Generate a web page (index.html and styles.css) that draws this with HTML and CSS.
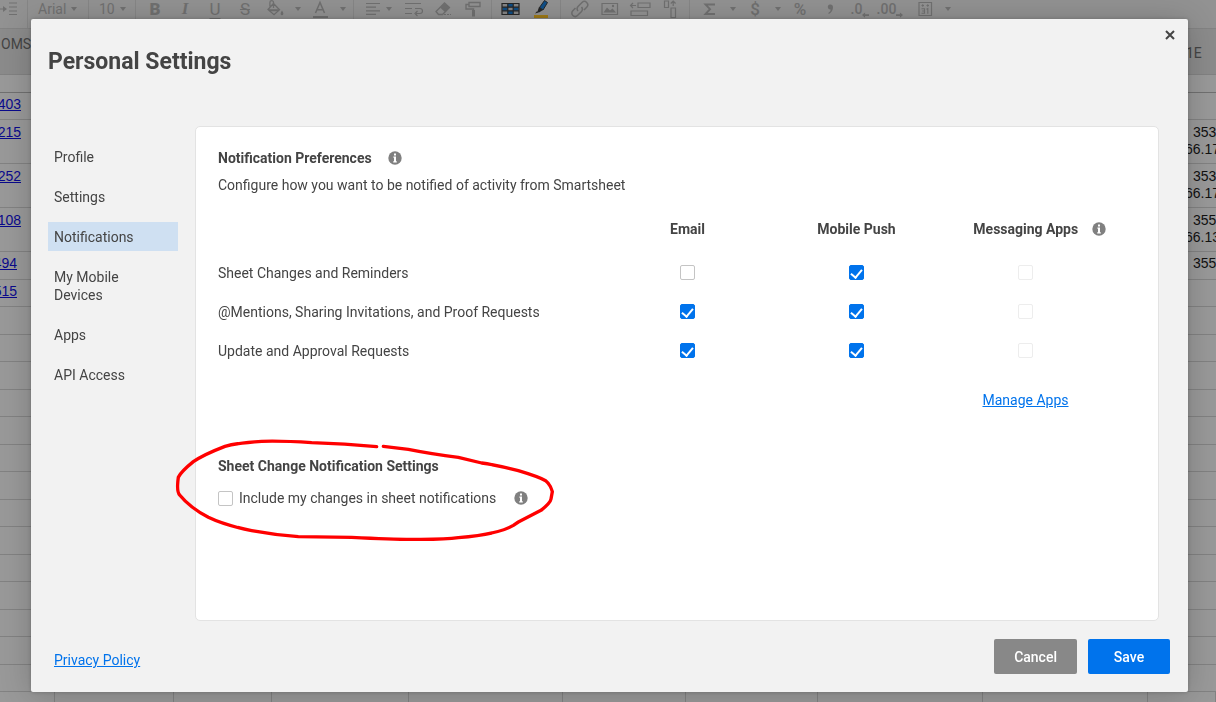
FILE: index.html
```html
<!DOCTYPE html>
<html lang="en">
<head>
<meta charset="utf-8">
<title>Personal Settings</title>
<link rel="stylesheet" href="styles.css">
</head>
<body>
<svg class="symbols" aria-hidden="true">
  <symbol id="info" viewBox="0 0 14 14"><circle cx="7" cy="7" r="6.7" fill="#808080"/><path fill="#fff" d="M6 2.600h2v1.900H6zM5.400 5.500H8v4.700h.8v1.200H5.200v-1.200H6V6.700h-.6z"/></symbol>
</svg>

<div class="app" aria-hidden="true">
  <div class="toolbar">
    <div class="group group-first">
      <svg class="indent" viewBox="0 0 18 20"><path d="M0 10h5M9 4h8M9 8h8M9 12h8M9 15.500h8" stroke-width="1.200"/><path class="solid" d="M3 7l4 3-4 3z"/></svg>
    </div>
    <div class="group"><button class="menu menu-font" tabindex="-1">Arial <i class="arrow"></i></button></div>
    <div class="group"><button class="menu menu-size" tabindex="-1">10 <i class="arrow"></i></button></div>
    <div class="group group-format">
      <button class="tool bold" tabindex="-1">B</button>
      <button class="tool italic" tabindex="-1">I</button>
      <button class="tool underline" tabindex="-1">U</button>
      <button class="tool strike" tabindex="-1">S</button>
      <button class="tool" tabindex="-1"><svg viewBox="0 0 20 20"><path d="M8.500 4.500l6 6.200-5.500 5-6-5.200zM8.500 9V3.500a1.800 1.800 0 0 0-3.600 0v4" stroke-width="1.300"/><path class="solid" d="M3 10.300h11.500l-2 2H5zM17 11.500c2.500 3.500 1 4.800 0 4.800s-2.500-1.300 0-4.800z"/></svg></button>
      <span class="caret"><i class="arrow"></i></span>
      <button class="tool" tabindex="-1"><svg viewBox="0 0 20 20"><path d="M5.500 14L10 3.500 14.500 14M7 10.800h6" stroke-width="1.500"/><path d="M3 18h15" stroke-width="2"/></svg></button>
      <span class="caret"><i class="arrow"></i></span>
    </div>
    <div class="group group-align">
      <button class="tool wide" tabindex="-1"><svg viewBox="0 0 20 20"><path d="M3 4.500h14M3 8.200h10M3 11.800h14M3 15.300h10" stroke-width="1.200"/></svg><i class="arrow"></i></button>
      <button class="tool" tabindex="-1"><svg viewBox="0 0 20 20"><path d="M2 4.500h16M2 9.500h7M2 14.500h7M12 9.500h5a2.200 2.200 0 0 1 0 5h-4M14.500 12l-2.500 2.500 2.500 2.500" stroke-width="1.200"/></svg></button>
      <button class="tool" tabindex="-1"><svg viewBox="0 0 20 20"><path d="M8 15.500H5.500L3 12.500 11.500 4l5 4.500-7 7z" stroke-width="1.300"/><path class="solid" d="M7 8.500L11.500 4l5 4.500-4.500 4.500z"/><path d="M11 15.500h7" stroke-dasharray="2 1"/></svg></button>
      <button class="tool" tabindex="-1"><svg viewBox="0 0 20 20"><path d="M6 3.500h11v4H6zM6 5.500H3v4.500h7.500v2.500" stroke-width="1.400"/><path class="solid" d="M9 11h3v6.500H9z"/></svg></button>
    </div>
    <div class="group group-view">
      <button class="tool" tabindex="-1"><svg viewBox="0 0 20 20"><path fill="#858585" stroke="none" d="M1 4.500h17v11H1z"/><path fill="#0d4d86" stroke="none" d="M1.500 8.200h5.300v3.600H1.500zM6.800 4.500h5.400v3.700H6.800zM12.200 8.200h5.300v3.600h-5.300zM6.800 11.800h5.400v3.700H6.800z"/><path stroke="#262626" stroke-width="1.200" d="M1 4.500h17v11H1zM1 8.200h17M1 11.800h17M6.800 4.500v11M12.200 4.500v11"/></svg></button>
      <button class="tool" tabindex="-1"><svg viewBox="0 0 20 20"><path fill="#a07b16" stroke="none" d="M3 16h14v3H3z"/><path fill="#104f88" stroke="#262626" stroke-width="1" d="M13.500 1.500l3 2L12 11 8.500 8.500z"/><path fill="#262626" stroke="none" d="M8 8l4 3-4 2.500-1.500-1zM6 12.200l1.700 1.300L4 14.500z"/></svg></button>
    </div>
    <div class="group group-insert">
      <button class="tool" tabindex="-1"><svg viewBox="0 0 20 20"><path d="M8 12a3.500 3.500 0 0 1 0-4.500l4-4a3.300 3.300 0 0 1 4.700 4.700L14 11M11.500 8a3.500 3.500 0 0 1 0 4.500l-4 4a3.300 3.300 0 0 1-4.700-4.700L5.500 9" stroke-width="1.500"/></svg></button>
      <button class="tool" tabindex="-1"><svg viewBox="0 0 20 20"><path d="M2 4.500h15.500v11H2z" stroke-width="1.200"/><path class="solid" d="M3.500 13.500l3.500-5 3 3 2.500-2 3.500 4z"/><circle class="solid" cx="13" cy="7" r="1.200"/></svg></button>
      <button class="tool" tabindex="-1"><svg class="row-icon" viewBox="0 0 22 20"><path d="M9 4h12v4.500H9zM2 12h16.500v4.500H2zM2 6.500h5M4 4L1.500 6.500 4 9" stroke-width="1.200"/></svg></button>
      <button class="tool" tabindex="-1"><svg viewBox="0 0 20 20"><path d="M4.500 2h4v6.500h-4zM11 9h4.500v9.500H11zM13.200 7V2.500M10.800 4.500L13.200 2l2.400 2.500" stroke-width="1.200"/></svg></button>
    </div>
    <div class="group group-number">
      <button class="tool" tabindex="-1"><svg viewBox="0 0 20 20"><path d="M14 6.500V5.500H5.500l4.500 4.700L5.500 15H14v-1" stroke-width="1.900"/></svg></button>
      <span class="caret"><i class="arrow"></i></span>
      <button class="tool currency" tabindex="-1">$</button>
      <span class="caret"><i class="arrow"></i></span>
      <button class="tool percent" tabindex="-1">%</button>
      <button class="tool" tabindex="-1"><svg viewBox="0 0 20 20"><path class="solid" d="M10 5.500a2.500 2.500 0 0 1 3 2.500c0 4-2.500 6.500-4.500 7v-1.300c1.500-.7 2-1.700 2.200-3.200A2.500 2.500 0 1 1 10 5.500z"/></svg></button>
      <button class="tool decimal" tabindex="-1">.0<svg viewBox="0 0 8 6"><path class="solid" d="M0 3l3.500-3v2H8v2H3.500v2z"/></svg></button>
      <button class="tool decimal" tabindex="-1">.00<svg viewBox="0 0 8 6"><path class="solid" d="M8 3L4.500 0v2H0v2h4.500v2z"/></svg></button>
      <button class="tool calendar" tabindex="-1"><svg viewBox="0 0 20 20"><path d="M4 3.500h12.500v13H4z" stroke-width="1.200"/><path d="M6.500 6.500h2.500M7.700 5.300v2.500M11.500 6.500h2.500M12.700 5.300v2.500M6.500 9.700h3v4.600h-3M7.200 12h2.300M11.500 10.200l1.300-.6v5.200" stroke-width="1.100"/></svg></button>
      <span class="caret"><i class="arrow"></i></span>
    </div>
  </div>
  <table class="sheet">
    <colgroup><col class="c1"><col class="c2"><col class="c3"><col class="c4"><col class="c5"><col class="c6"><col class="c7"><col class="c8"><col class="c8"><col></colgroup>
    <thead>
      <tr class="names"><th class="upper">OMS</th><th></th><th></th><th></th><th></th><th></th><th></th><th></th><th></th><th class="last">1E</th></tr>
      <tr class="filter"><th></th><th></th><th></th><th></th><th></th><th></th><th></th><th></th><th></th><th></th></tr>
    </thead>
    <tbody>
      <tr class="odd"><td class="key"><a>403</a></td><td colspan="8"></td><td></td></tr>
      <tr class="tall"><td class="key"><a>215</a></td><td colspan="8"></td><td class="value"><span>353</span>66.17</td></tr>
      <tr class="tall"><td class="key"><a>252</a></td><td colspan="8"></td><td class="value"><span>353</span>66.17</td></tr>
      <tr class="tall"><td class="key"><a>108</a></td><td colspan="8"></td><td class="value"><span>355</span>66.13</td></tr>
      <tr><td class="key short"><a>494</a></td><td colspan="8"></td><td class="value"><span>355</span></td></tr>
      <tr class="odd"><td class="key short"><a>515</a></td><td colspan="8"></td><td></td></tr>
      <tr><td colspan="10"></td></tr><tr class="odd"><td colspan="10"></td></tr>
      <tr><td colspan="10"></td></tr><tr class="odd"><td colspan="10"></td></tr>
      <tr><td colspan="10"></td></tr><tr class="odd"><td colspan="10"></td></tr>
      <tr><td colspan="10"></td></tr><tr class="odd"><td colspan="10"></td></tr>
      <tr><td colspan="10"></td></tr><tr class="odd"><td colspan="10"></td></tr>
      <tr><td colspan="10"></td></tr><tr class="odd"><td colspan="10"></td></tr>
      <tr><td colspan="10"></td></tr><tr class="odd"><td colspan="10"></td></tr>
      <tr class="ruled"><td></td><td></td><td></td><td></td><td></td><td></td><td></td><td></td><td></td><td></td></tr>
    </tbody>
  </table>
</div>

<div class="overlay">
  <div class="dialog" role="dialog" aria-labelledby="title">
    <header class="dialog-head">
      <h1 id="title">Personal Settings</h1>
      <button class="close" aria-label="Close"><svg viewBox="0 0 10 10"><path d="M1 1l8 8M9 1L1 9"/></svg></button>
    </header>
    <div class="dialog-body">
      <nav class="side">
        <a href="#">Profile</a>
        <a href="#">Settings</a>
        <a href="#" class="active">Notifications</a>
        <a href="#">My Mobile Devices</a>
        <a href="#">Apps</a>
        <a href="#">API Access</a>
      </nav>
      <main class="panel">
        <section>
          <h2>Notification Preferences <svg class="info"><use href="#info"/></svg></h2>
          <p>Configure how you want to be notified of activity from Smartsheet</p>
          <table class="prefs">
            <thead>
              <tr><td></td><th scope="col">Email</th><th scope="col">Mobile Push</th><th scope="col" class="with-info">Messaging Apps <svg class="info"><use href="#info"/></svg></th></tr>
            </thead>
            <tbody>
              <tr><th scope="row">Sheet Changes and Reminders</th><td><input type="checkbox" aria-label="Sheet changes by email"></td><td><input type="checkbox" checked aria-label="Sheet changes by mobile push"></td><td><input type="checkbox" disabled aria-label="Sheet changes by messaging apps"></td></tr>
              <tr><th scope="row">@Mentions, Sharing Invitations, and Proof Requests</th><td><input type="checkbox" checked aria-label="Mentions by email"></td><td><input type="checkbox" checked aria-label="Mentions by mobile push"></td><td><input type="checkbox" disabled aria-label="Mentions by messaging apps"></td></tr>
              <tr><th scope="row">Update and Approval Requests</th><td><input type="checkbox" checked aria-label="Updates by email"></td><td><input type="checkbox" checked aria-label="Updates by mobile push"></td><td><input type="checkbox" disabled aria-label="Updates by messaging apps"></td></tr>
            </tbody>
            <tfoot>
              <tr><td colspan="3"></td><td><a class="link" href="#">Manage Apps</a></td></tr>
            </tfoot>
          </table>
        </section>
        <section class="changes">
          <h2>Sheet Change Notification Settings</h2>
          <div class="option">
            <input type="checkbox" id="mine"><label for="mine">Include my changes in sheet notifications</label>
            <svg class="info"><use href="#info"/></svg>
          </div>
          <svg class="marker" viewBox="0 0 1200 360" aria-hidden="true"><path d="M635 50Q540 41 440 38Q350 32 290 34Q215 39 180 49Q115 74 85 95Q48 125 40 142Q34 185 44 195Q75 233 130 262Q180 286 260 302Q330 315 400 320L560 322Q680 328 740 328Q840 329 880 323Q1000 313 1045 286L1060 276L1128 241Q1156 219 1158 207L1162 185Q1157 165 1142 152Q1120 140 1060 122Q1000 106 950 99L880 82Q800 72 730 58L655 49"/></svg>
        </section>
      </main>
    </div>
    <footer class="dialog-foot">
      <a class="link" href="#">Privacy Policy</a>
      <div class="actions">
        <button class="btn cancel">Cancel</button>
        <button class="btn save">Save</button>
      </div>
    </footer>
  </div>
</div>
</body>
</html>
```
FILE: styles.css
```css
* { box-sizing: border-box; }
html, body { height: 100%; }
body {
  margin: 0;
  overflow: hidden;
  background: #999;
  color: #444;
  font: 14px/18px Roboto, sans-serif;
}
button { border: 0; padding: 0; background: none; color: inherit; font: inherit; }
svg { flex: none; }
.symbols { position: absolute; width: 0; height: 0; }

/* Dimmed sheet behind the dialog */
.app { height: 100%; overflow: hidden; }
.toolbar { display: flex; height: 29px; background: #929292; border-bottom: 1px solid #838383; color: #707070; }
.group { display: flex; align-items: center; padding-bottom: 10px; border-left: 1px solid #868686; }
.group-first { width: 27px; border-left: 0; }
.toolbar svg { width: 20px; height: 20px; fill: none; stroke: #707070; }
.toolbar .indent { width: 18px; }
.toolbar .solid { fill: #707070; stroke: none; }
.menu { display: flex; align-items: center; gap: 5px; padding-left: 10px; }
.menu-font { width: 60px; }
.menu-size { width: 46px; }
.arrow { border: 3px solid transparent; border-top: 4px solid #707070; border-bottom: 0; }
.group-format, .group-align, .group-view, .group-insert { padding-left: 4px; padding-right: 4px; }
.group-format { padding-right: 3px; }
.group-number { padding-left: 5px; }
.group-align { padding-right: 3px; }
.tool { display: flex; align-items: center; justify-content: center; width: 30px; height: 18px; font-size: 17px; }
.wide { width: 40px; justify-content: flex-start; gap: 3px; padding-left: 5px; }
.toolbar .row-icon { width: 22px; }
.caret { display: flex; justify-content: center; width: 15px; }
.bold { font-weight: 900; }
.italic { font-family: "Liberation Serif", serif; font-style: italic; font-weight: 700; }
.underline { text-decoration: underline; text-underline-offset: 3px; }
.strike { text-decoration: line-through; }
.currency, .percent { font-weight: 500; }
.decimal { font-size: 14px; font-weight: 500; }
.toolbar .decimal svg { width: 7px; height: 6px; align-self: flex-end; }
.calendar { margin-left: 5px; }

.sheet { width: 100%; table-layout: fixed; border-collapse: separate; border-spacing: 0; }
.sheet th, .sheet td { padding: 0; border-bottom: 1px solid #828282; }
.c1 { width: 55px; }
.c2 { width: 119px; }
.c3 { width: 98px; }
.c4 { width: 137px; }
.c5 { width: 154px; }
.c6 { width: 123px; }
.c7 { width: 132px; }
.c8 { width: 165px; }
.names th { height: 46px; background: #8b8b8b; font-weight: 400; text-align: left; }
.sheet .upper { padding: 0 0 15px 1px; }
.sheet .last { padding: 3px 0 0 38px; }
.sheet .filter th { height: 18px; border-bottom-color: #707070; }
.sheet tbody td { height: 28px; vertical-align: top; font: 14px/17px "Liberation Sans", Arial, sans-serif; color: #111; }
.sheet tbody .odd td { height: 27px; }
.sheet tbody .tall td { height: 44px; }
.sheet tbody .key { padding: 3px 34px 0 0; direction: rtl; white-space: nowrap; }
.sheet tbody .short { padding-right: 38px; }
.key a { color: #0a0a8c; text-decoration: underline; }
.sheet tbody .value { padding: 3px 0 0 37px; }
.sheet tbody .tall .key, .sheet tbody .tall .value { padding-top: 4px; }
.value span { display: block; padding-left: 8px; }
.ruled td { border-right: 1px solid #828282; }

/* Dialog */
.overlay { position: fixed; inset: 0; display: flex; padding: 19px 28px 10px 31px; }
.dialog {
  flex: 1;
  display: flex;
  flex-direction: column;
  background: #f2f2f2;
  border-radius: 2px;
  box-shadow: 0 3px 32px rgba(0, 0, 0, .2), 0 0 4px rgba(0, 0, 0, .2);
}
.dialog-head { display: flex; justify-content: space-between; align-items: flex-start; padding: 10px 12px 0 17px; height: 107px; }
h1 { margin: 19px 0 0; font-size: 23px; line-height: 28px; font-weight: 700; }
.close { display: flex; width: 12px; height: 12px; align-items: center; justify-content: center; }
.close svg { width: 10px; height: 10px; stroke: #444; stroke-width: 2; fill: none; }
.dialog-body { flex: 1; display: flex; gap: 17px; padding: 0 29px 0 17px; }
.side { display: flex; flex-direction: column; gap: 11px; width: 130px; padding-top: 16px; }
.side a { padding: 6px 30px 5px 6px; color: inherit; text-decoration: none; }
.side .active { background: #cfe0f2; }
.panel { flex: 1; padding: 22px 48px 22px 22px; background: #fff; border: 1px solid #e3e3e3; border-radius: 5px; }
h2 { display: flex; align-items: center; gap: 16px; margin: 0; font-size: 14px; line-height: 18px; font-weight: 700; }
.panel p { margin: 9px 0 11px; }
.info { width: 14px; height: 14px; }
.prefs { width: 100%; table-layout: fixed; border-collapse: collapse; }
.prefs th, .prefs td { width: 169px; padding: 0; text-align: center; }
.prefs tr > :first-child { width: auto; text-align: left; font-weight: 400; }
.prefs thead tr { height: 48px; }
.prefs thead th { font-weight: 700; }
.prefs .with-info { padding-left: 28px; white-space: nowrap; }
.with-info .info { margin-left: 10px; vertical-align: -2px; }
.prefs tbody tr { height: 39px; }
.prefs tfoot tr { height: 60px; }
input[type="checkbox"] {
  appearance: none;
  display: flex;
  justify-content: center;
  align-items: flex-start;
  width: 15px;
  height: 15px;
  margin: 0;
  background: #fff;
  border: 1px solid #c4c4c4;
  border-radius: 2px;
}
.prefs input[type="checkbox"] { margin: 0 auto; }
input[type="checkbox"]:checked { background: #0073ec; border-color: #0073ec; }
input[type="checkbox"]:checked::after {
  content: "";
  width: 5px;
  height: 9px;
  margin-top: 1px;
  border: solid #fff;
  border-width: 0 2px 2px 0;
  transform: rotate(40deg);
}
input[type="checkbox"]:disabled { border-color: #ededed; }
.link { color: #0073ec; text-decoration: underline; }
.changes { position: relative; margin-top: 27px; }
.option { display: flex; align-items: center; gap: 18px; margin-top: 14px; }
.option label { margin-left: -12px; }
.marker { position: absolute; left: -53px; top: -27px; width: 400px; height: 120px; fill: none; stroke: #f00; stroke-width: 10; stroke-linecap: round; stroke-linejoin: round; pointer-events: none; }
.dialog-foot { display: flex; align-items: flex-end; justify-content: space-between; padding: 18px 18px 18px 23px; }
.dialog-foot .link { padding-bottom: 5px; }
.actions { display: flex; gap: 11px; }
.btn { min-width: 82px; height: 35px; padding: 0 20px; border-radius: 2px; color: #fff; font-weight: 500; }
.cancel { background: #888; }
.save { background: #0073ec; }
```
